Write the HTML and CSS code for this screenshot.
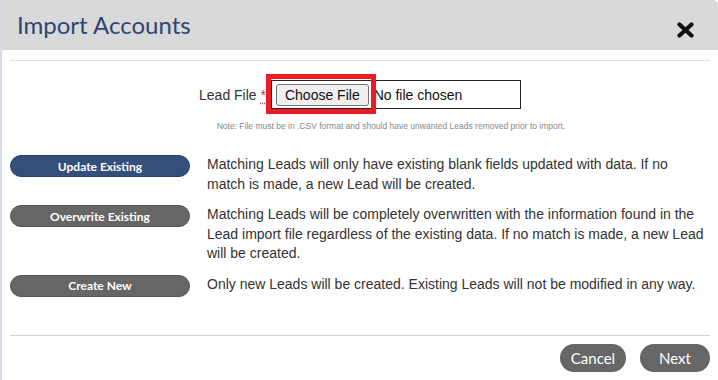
FILE: index.html
```html
<!DOCTYPE html>
<html>

<head>
    <link rel="stylesheet" href="styles.css">
</head>

<body>

    <div class="modal">
        <div class="modal-header">
            <span class="modal-title">Import Accounts</span>
            <button class="close-btn" title="Close">
                <svg width="17" height="16" viewBox="0 0 17 16">
                    <path d="M2.5 2.5 L14.5 13.5 M14.5 2.5 L2.5 13.5" stroke="#111" stroke-width="4.2" stroke-linecap="round" fill="none" />
                </svg>
            </button>
        </div>

        <div class="modal-body">
            <div class="file-row">
                <span class="file-label">Lead File <abbr class="required">*</abbr></span>
                <div class="file-wrap">
                    <div class="file-input">
                        <span class="file-btn">Choose File</span>
                        <span class="file-name">No file chosen</span>
                    </div>
                    <div class="highlight"></div>
                </div>
            </div>
            <p class="note">Note: File must be in .CSV format and should have unwanted Leads removed prior to import.</p>

            <div class="option-list">
                <div class="option">
                    <button class="pill pill-active">Update Existing</button>
                    <p class="option-text">Matching Leads will only have existing blank fields updated with data. If no match is made, a new Lead will be created.</p>
                </div>
                <div class="option">
                    <button class="pill">Overwrite Existing</button>
                    <p class="option-text">Matching Leads will be completely overwritten with the information found in the Lead import file regardless of the existing data. If no match is made, a new Lead will be created.</p>
                </div>
                <div class="option">
                    <button class="pill">Create New</button>
                    <p class="option-text">Only new Leads will be created. Existing Leads will not be modified in any way.</p>
                </div>
            </div>

            <div class="modal-footer">
                <button class="footer-btn cancel">Cancel</button>
                <button class="footer-btn next">Next</button>
            </div>
        </div>
    </div>

</body>

</html>
```

FILE: styles.css
```css
body {
    margin: 0;
    font-family: Arial, "Liberation Sans", sans-serif;
    background-color: #fff;
}

.modal {
    width: 716px;
    height: 380px;
    border-left: 2px solid #d3dce8;
    background-color: #fff;
}

.modal-header {
    height: 50px;
    background-color: #d9d9d9;
    border-top-right-radius: 5px;
    display: flex;
    justify-content: space-between;
    align-items: center;
    padding: 0 24px 0 15px;
}

.modal-title {
    font-family: Lato, sans-serif;
    font-size: 24px;
    color: #2f4675;
    margin-top: -1px;
}

.close-btn {
    border: none;
    background: none;
    padding: 0;
    width: 17px;
    height: 16px;
    margin-top: 9px;
    cursor: pointer;
}

.close-btn svg {
    display: block;
}

.modal-body {
    padding: 10px 8px 0 8px;
}

.modal-body::before {
    content: "";
    display: block;
    border-top: 1px solid #dedede;
}

.file-row {
    display: flex;
    justify-content: center;
    align-items: center;
    margin-top: 19px;
}

.file-label {
    font-size: 14px;
    color: #333;
    margin-right: 5px;
}

.required {
    color: #c0392b;
    text-decoration: underline dotted #c0392b;
    text-underline-offset: 3px;
}

.file-wrap {
    position: relative;
}

.file-input {
    width: 244px;
    height: 27px;
    border: 1px solid #222;
    display: flex;
    align-items: center;
    padding-left: 4px;
}

.file-btn {
    font-size: 14px;
    color: #111;
    background-color: #efefef;
    border: 1px solid #767676;
    border-radius: 3px;
    padding: 2px 8px;
    line-height: 16px;
}

.file-name {
    font-size: 14px;
    color: #111;
    margin-left: 5px;
}

/* annotation drawn over the file button */
.highlight {
    position: absolute;
    left: -5px;
    top: -6px;
    width: 100px;
    height: 30px;
    border: 5px solid #ed1c24;
}

.note {
    margin: 12px 0 0 0;
    padding-left: 62px;
    text-align: center;
    font-size: 8.5px;
    color: #888;
}

.option-list {
    margin-top: 24px;
}

.option {
    display: flex;
    align-items: flex-start;
    margin-bottom: 11px;
}

.pill {
    flex: none;
    width: 180px;
    height: 22px;
    border: 1px solid #555;
    border-radius: 11px;
    background-color: #666;
    color: #fff;
    font-family: Lato, sans-serif;
    font-weight: bold;
    font-size: 12px;
    cursor: pointer;
    padding: 0;
}

.pill-active {
    background-color: #344f7b;
    border-color: #2a3f63;
}

.option-text {
    margin: 0 0 0 17px;
    width: 498px;
    font-size: 14px;
    line-height: 19.5px;
    color: #333;
}

.modal-footer {
    margin-top: 38px;
    border-top: 1px solid #d4d4d4;
    display: flex;
    justify-content: flex-end;
    gap: 14px;
    padding-top: 8px;
}

.footer-btn {
    height: 28px;
    border: none;
    border-radius: 14px;
    background-color: #666;
    color: #fff;
    font-family: Lato, sans-serif;
    font-size: 15px;
    cursor: pointer;
    padding: 0;
}

.cancel {
    width: 66px;
}

.next {
    width: 70px;
}
```
